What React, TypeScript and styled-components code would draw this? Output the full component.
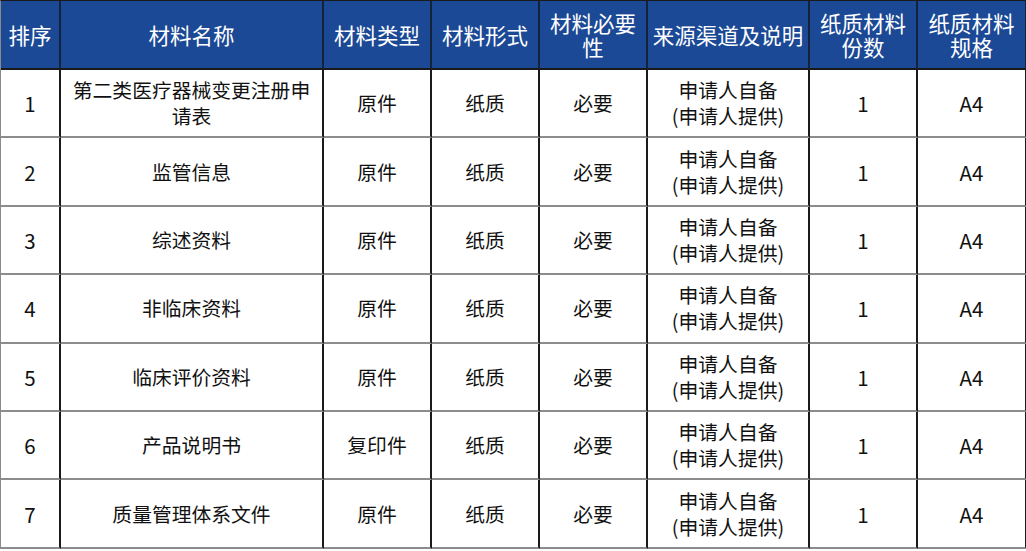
import React from "react";
import styled, { createGlobalStyle } from "styled-components";

const Global = createGlobalStyle`
  html, body { margin: 0; padding: 0; background: #ffffff; }
  body { font-family: "Noto Sans CJK SC", "Noto Sans", sans-serif; }
`;

const Grid = styled.div`
  display: grid;
  grid-template-columns: 60px 263px 108px 108px 108px 162px 108px 109px;
  grid-template-rows: 69px repeat(7, 68.4px);
  width: 1026px;
  box-sizing: border-box;
  border-top: 1px solid #1a1a1a;
  border-left: 1px solid #8a8a8a;
`;

const HeadCell = styled.div`
  background: #1b4996;
  color: #ffffff;
  font-size: 21.5px;
  line-height: 24px;
  display: flex;
  align-items: center;
  justify-content: center;
  text-align: center;
  padding: 0 2px;
  box-sizing: border-box;
  border-right: 2px solid #15233a;
  border-bottom: 2px solid #1a1a1a;
`;

const Cell = styled.div<{ $latin?: boolean }>`
  background: #ffffff;
  color: #111111;
  font-size: ${(p) => (p.$latin ? "20.5px" : "19.8px")};
  line-height: 26px;
  display: flex;
  align-items: center;
  justify-content: center;
  text-align: center;
  padding: 0 8px;
  box-sizing: border-box;
  border-right: 2px solid #1a1a1a;
  border-bottom: 2px solid #8c8c8c;
`;

const headers = [
  "排序",
  "材料名称",
  "材料类型",
  "材料形式",
  "材料必要性",
  "来源渠道及说明",
  "纸质材料份数",
  "纸质材料规格",
];

const rows = [
  ["1", "第二类医疗器械变更注册申请表", "原件"],
  ["2", "监管信息", "原件"],
  ["3", "综述资料", "原件"],
  ["4", "非临床资料", "原件"],
  ["5", "临床评价资料", "原件"],
  ["6", "产品说明书", "复印件"],
  ["7", "质量管理体系文件", "原件"],
];

export default function App() {
  return (
    <>
      <Global />
      <Grid>
        {headers.map((h) => (
          <HeadCell key={h}>{h}</HeadCell>
        ))}
        {rows.map(([n, name, type]) => (
          <React.Fragment key={n}>
            <Cell $latin>{n}</Cell>
            <Cell>{name}</Cell>
            <Cell>{type}</Cell>
            <Cell>纸质</Cell>
            <Cell>必要</Cell>
            <Cell>
              申请人自备
              <br />
              (申请人提供)
            </Cell>
            <Cell $latin>1</Cell>
            <Cell $latin>A4</Cell>
          </React.Fragment>
        ))}
      </Grid>
    </>
  );
}
